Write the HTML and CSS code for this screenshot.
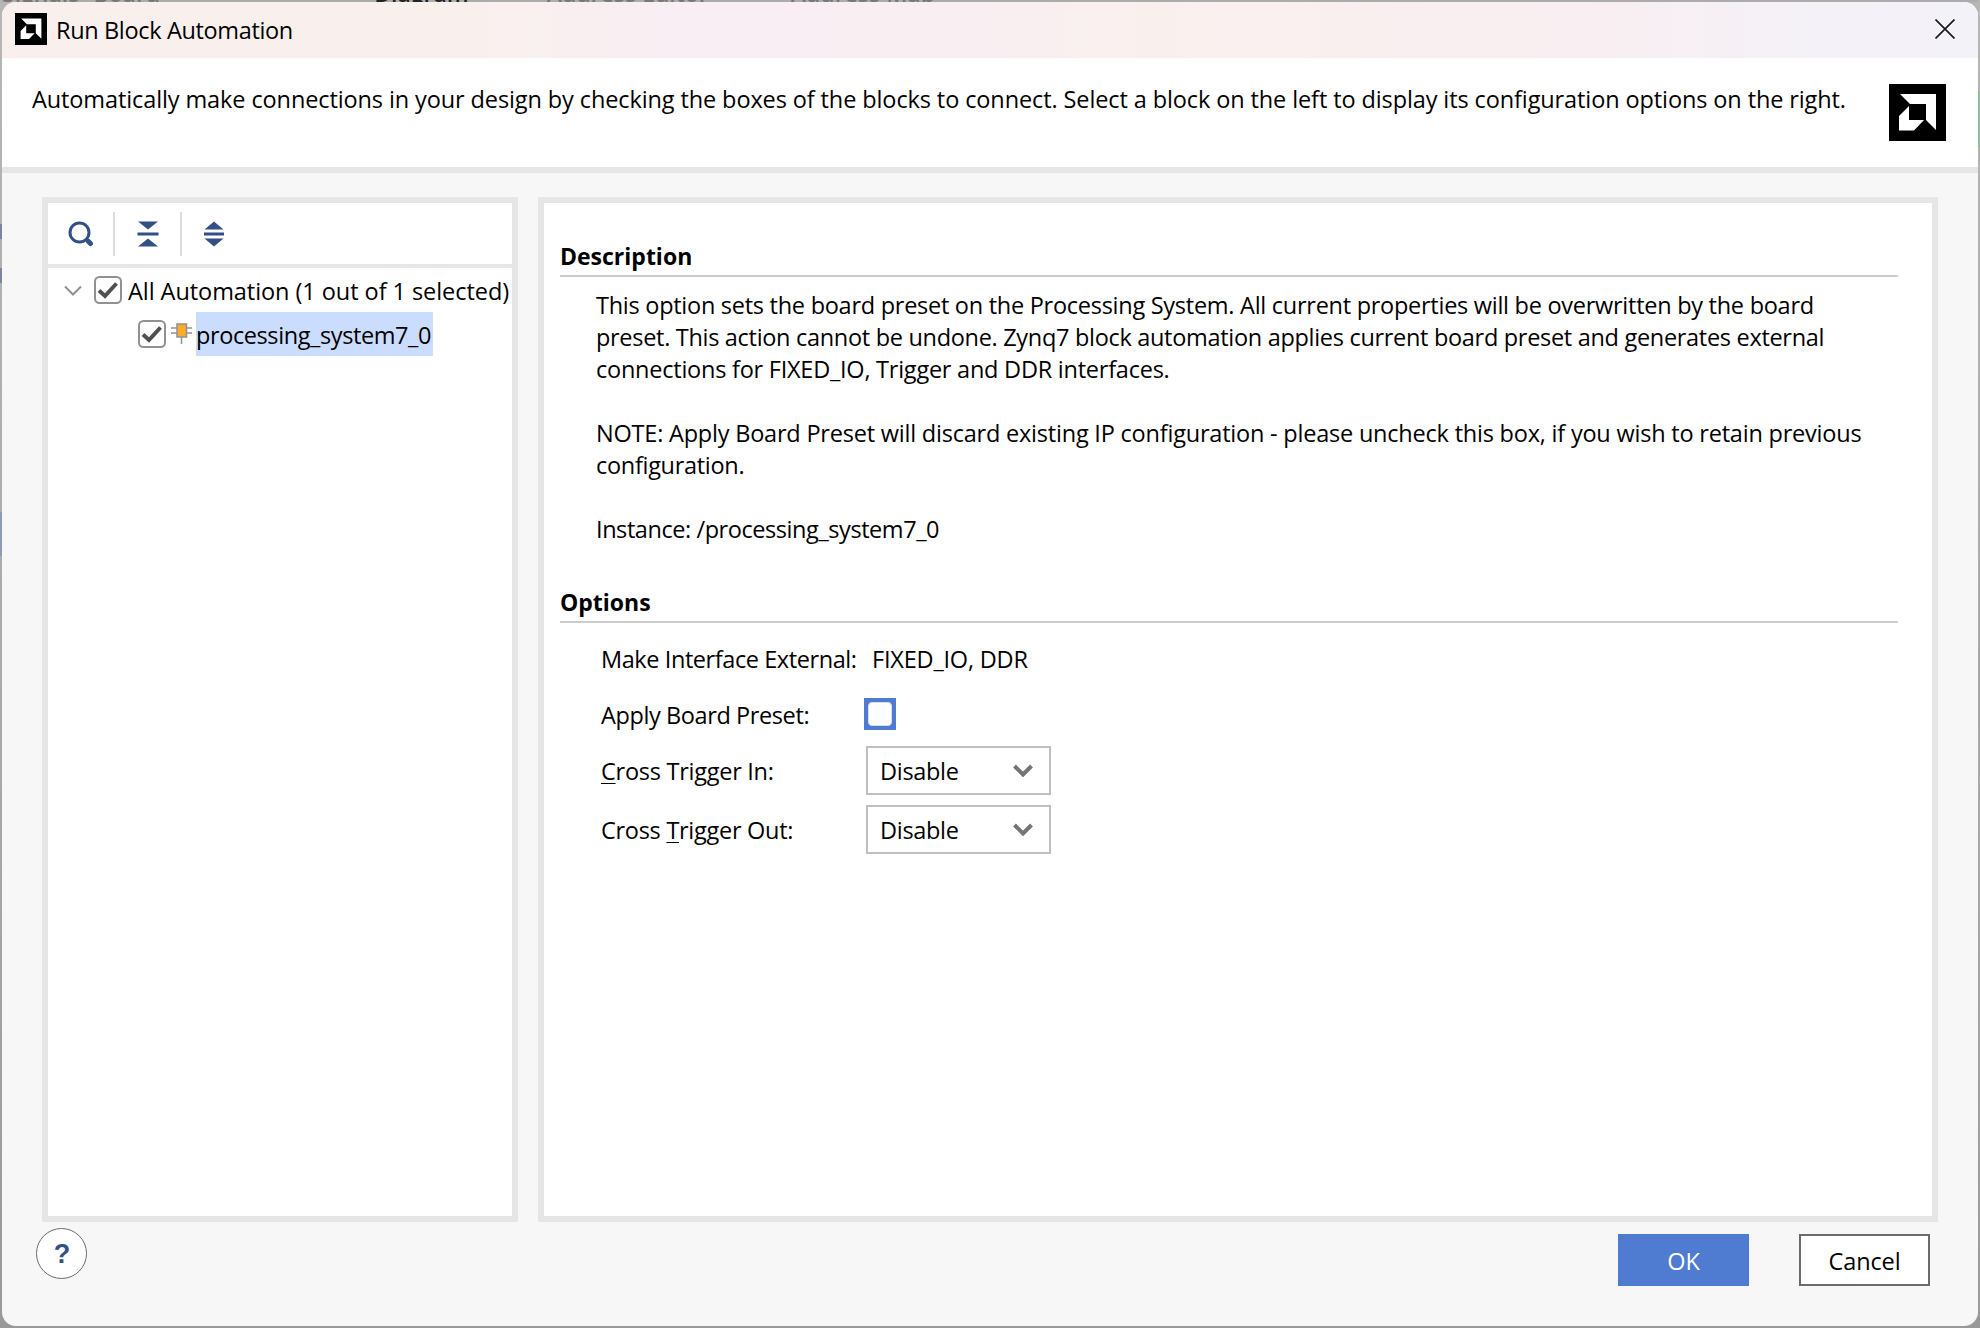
FILE: index.html
```html
<!DOCTYPE html>
<html lang="en">
<head>
<meta charset="utf-8">
<title>Run Block Automation</title>
<link rel="stylesheet" href="styles.css">
</head>
<body>
<div class="backdrop-tabs"><span class="tab">Signals</span><span class="tab">Board</span><span class="tab current">Diagram</span><span class="tab wide">Address Editor</span><span class="tab">Address Map</span></div>
<main class="dialog">
  <header class="titlebar">
    <svg class="app-icon" viewBox="0 0 57 57"><path fill="#000" d="M0 0h57v57H0z"/><path fill="#fff" d="M11 10h36v36L37 36V20H21zM10 32l10-10v14h15L25 46.500H10z"/></svg>
    <h1 class="title">Run Block Automation</h1>
    <svg class="close" viewBox="0 0 20 20"><path d="M.5.500l19 19M19.500.500l-19 19" stroke="#1a1a1a" stroke-width="1.700"/></svg>
  </header>
  <section class="banner">
    <p class="intro">Automatically make connections in your design by checking the boxes of the blocks to connect. Select a block on the left to display its configuration options on the right.</p>
    <svg class="brand" viewBox="0 0 57 57"><path fill="#000" d="M0 0h57v57H0z"/><path fill="#fff" d="M11 10h36v36L37 36V20H21zM10 32l10-10v14h15L25 46.500H10z"/></svg>
  </section>
  <div class="panels">
    <aside class="tree-panel">
      <div class="toolbar">
        <button class="tool"><svg width="26" height="26" viewBox="0 0 26 26"><circle cx="11.500" cy="11.500" r="9.500" fill="none" stroke="#335084" stroke-width="3"/><path d="M20.500 20.500l2 2" stroke="#335084" stroke-width="5" stroke-linecap="round"/></svg></button>
        <button class="tool"><svg width="22" height="26" viewBox="0 0 22 26"><path fill="#335084" d="M1 .5h20L11 8.500zM.5 11.500h21v3H.5zM1 25.500h20l-10-8z"/></svg></button>
        <button class="tool"><svg width="22" height="26" viewBox="0 0 22 26"><path fill="#335084" d="M1.500 8.500h19L11 .5zM1 11.500h20v3H1zM1.500 17.500h19l-9.500 8z"/></svg></button>
      </div>
      <div class="row">
        <svg class="twisty" viewBox="0 0 18 11"><path d="M1 1.500l8 8 8-8" fill="none" stroke="#909090" stroke-width="2"/></svg>
        <svg class="check" viewBox="0 0 28 28"><rect x="1" y="1" width="26" height="26" rx="4.500" fill="#fff" stroke="#919191" stroke-width="2"/><path d="M5 14.500l6 5.500L22.500 7.500" fill="none" stroke="#505050" stroke-width="4"/></svg>
        <span class="t-all">All Automation (1 out of 1 selected)</span>
      </div>
      <div class="row child">
        <svg class="check" viewBox="0 0 28 28"><rect x="1" y="1" width="26" height="26" rx="4.500" fill="#fff" stroke="#919191" stroke-width="2"/><path d="M5 14.500l6 5.500L22.500 7.500" fill="none" stroke="#505050" stroke-width="4"/></svg>
        <svg class="chip" viewBox="0 0 21 21"><path d="M0 5h21M0 10h21M10.500 14v7" stroke="#919191" stroke-width="1.500"/><rect x="6" y="1" width="9.500" height="13" fill="#fcac27" stroke="#919191" stroke-width="1.500"/></svg>
        <span class="selected">processing_system7_0</span>
      </div>
    </aside>
    <section class="detail">
      <h2>Description</h2>
      <div class="desc">
        <p class="d1">This option sets the board preset on the Processing System. All current properties will be overwritten by the board</p>
        <p class="d2">preset. This action cannot be undone. Zynq7 block automation applies current board preset and generates external</p>
        <p class="d3">connections for FIXED_IO, Trigger and DDR interfaces.</p>
        <p class="d4 gap">NOTE: Apply Board Preset will discard existing IP configuration - please uncheck this box, if you wish to retain previous</p>
        <p class="d5">configuration.</p>
        <p class="d6 gap">Instance: /processing_system7_0</p>
      </div>
      <h2>Options</h2>
      <div class="options">
        <span class="o1">Make Interface External:</span><span class="o1v">FIXED_IO, DDR</span>
        <span class="o2">Apply Board Preset:</span><span class="box"><span class="box-in"></span></span>
        <span class="o3"><u>C</u>ross Trigger In:</span>
        <span class="select"><span class="dis">Disable</span><svg class="chev" viewBox="0 0 20 13"><path d="M1.500 2l8.500 8.500L18.500 2" fill="none" stroke="#757575" stroke-width="4"/></svg></span>
        <span class="o4">Cross <u>T</u>rigger Out:</span>
        <span class="select"><span class="dis">Disable</span><svg class="chev" viewBox="0 0 20 13"><path d="M1.500 2l8.500 8.500L18.500 2" fill="none" stroke="#757575" stroke-width="4"/></svg></span>
      </div>
    </section>
  </div>
  <footer class="footer">
    <button class="help">?</button>
    <button class="btn ok">OK</button>
    <button class="btn cancel">Cancel</button>
  </footer>
</main>
</body>
</html>
```
FILE: styles.css
```css
* { box-sizing: border-box; margin: 0; padding: 0; }
body {
  width: 1980px; height: 1328px; padding: 0 2px 2px; overflow: hidden; color: #000;
  background:
    linear-gradient(#8fbf98, #8fbf98) 1978px 91px / 2px 56px no-repeat,
    linear-gradient(#8c9bb8, #8c9bb8) 0 512px / 2px 44px no-repeat,
    linear-gradient(#7d84a0, #7d84a0) 0 224px / 2px 15px no-repeat,
    linear-gradient(#7d84a0, #7d84a0) 0 268px / 2px 15px no-repeat,
    linear-gradient(#b6b6b6, #a8a8a8 60%, #999);
  font: 23.5px/32px "Open Sans", "Noto Sans", sans-serif; white-space: nowrap;
}
svg { display: block; flex: none; }
button { font: inherit; border: 0; background: none; }
.backdrop-tabs { height: 2px; overflow: hidden; display: flex; align-items: flex-end; background: #acacac; color: #777; font-size: 23px; line-height: 18px; font-weight: 600; }
.tab { flex: none; margin-right: 14px; }
.current { margin: 0 78px 0 200px; color: #222; }
.wide { margin-right: 82px; }
.dialog { width: 1976px; height: 1324px; border-radius: 14px; overflow: hidden; background: #f7f7f7; display: flex; flex-direction: column; }
.titlebar { height: 56px; flex: none; display: flex; align-items: center; padding: 0 23px 2px 13px; background: linear-gradient(90deg, #f9f0ee 0%, #f9f0ee 24%, #f9eef3 34%, #f9eef2 48%, #f9f0ee 58%, #f9eef1 80%, #f4f1f7 91%, #f3f2f8 100%); }
.app-icon { width: 32px; height: 32px; }
.title { font-size: 23.5px; font-weight: 400; margin-left: 9px; padding-top: 2px; flex: 1; letter-spacing: -.35px; }
.close { width: 20px; height: 20px; }
.banner { height: 115px; flex: none; background: #fff; border-bottom: 6px solid #e6e6e6; display: flex; justify-content: space-between; padding: 26px 32px 0 30px; }
.intro { letter-spacing: -.107px; margin-top: -1px; }
.brand { width: 57px; height: 57px; }
.panels { display: flex; gap: 20px; height: 1025px; margin: 24px 40px 0; flex: none; }
.tree-panel, .detail { border: 6px solid #e6e6e6; background: #fff; }
.tree-panel { width: 476px; }
.toolbar { height: 65px; border-bottom: 4px solid #e6e6e6; display: flex; align-items: center; }
.tool { width: 67px; height: 44px; display: flex; align-items: center; justify-content: center; border-right: 2px solid #dcdcdc; }
.tool:last-child { width: 66px; border-color: transparent; }
.row { height: 44px; display: flex; align-items: center; padding-left: 16px; }
.twisty { width: 18px; height: 11px; margin-right: 12px; }
.check { width: 28px; height: 28px; }
.t-all { margin-left: 6px; padding-top: 2px; letter-spacing: -.06px; }
.child { padding-left: 90px; }
.chip { width: 21px; height: 21px; margin: 0 4px 2px 5px; }
.selected { width: 237px; height: 44px; line-height: 47px; background: #cbddfe; letter-spacing: -.4px; }
.detail { flex: 1; padding: 34px 34px 0 16px; }
h2 { font-size: 23px; line-height: 32px; height: 40px; border-bottom: 2px solid #cdcdcd; padding-top: 3px; }
.desc { padding: 12px 0 0 36px; height: 306px; }
.d1 { letter-spacing: -.267px; }
.d2 { letter-spacing: -.304px; }
.d3 { letter-spacing: -.238px; }
.d4 { letter-spacing: -.209px; }
.d5 { letter-spacing: -.3px; }
.d6 { letter-spacing: -.43px; }
.gap { margin-top: 32px; }
.options { display: grid; grid-template-columns: 265px 1fr; grid-template-rows: 50px 60px 53px 65px; align-items: center; padding: 11px 0 0 41px; }
.options u { text-decoration-thickness: 1px; text-underline-offset: 3px; }
.o1 { letter-spacing: -.42px; }
.o1v { padding-left: 6px; letter-spacing: -.2px; }
.o2 { letter-spacing: -.4px; padding-top: 2px; }
.o3 { letter-spacing: -.26px; }
.o4 { letter-spacing: -.28px; }
.dis { letter-spacing: -.3px; }
.box { width: 32px; height: 32px; background: #4f7bd0; padding: 4px; margin-left: -2px; }
.box-in { display: block; width: 24px; height: 24px; background: #fff; border: 1px solid #ddd; border-radius: 4px; }
.select { width: 185px; height: 49px; border: 2px solid #bfbfbf; display: flex; align-items: center; justify-content: space-between; padding: 0 16px 0 12px; }
.chev { width: 20px; height: 13px; }
.footer { display: flex; align-items: flex-start; padding: 6px 48px 0 34px; }
.help { width: 51px; height: 51px; border: 1px solid #6b6b6b; border-radius: 50%; background: #fff; color: #335084; font: bold 27px/49px "Liberation Sans", Arial, sans-serif; padding: 1px 0 0 1px; margin-right: auto; }
.btn { width: 131px; height: 52px; margin-top: 6px; padding-top: 2px; letter-spacing: -.1px; }
.ok { background: #4f7bd0; color: #fff; margin-right: 50px; }
.cancel { background: #fff; border: 2px solid #6b6b6b; }
```
